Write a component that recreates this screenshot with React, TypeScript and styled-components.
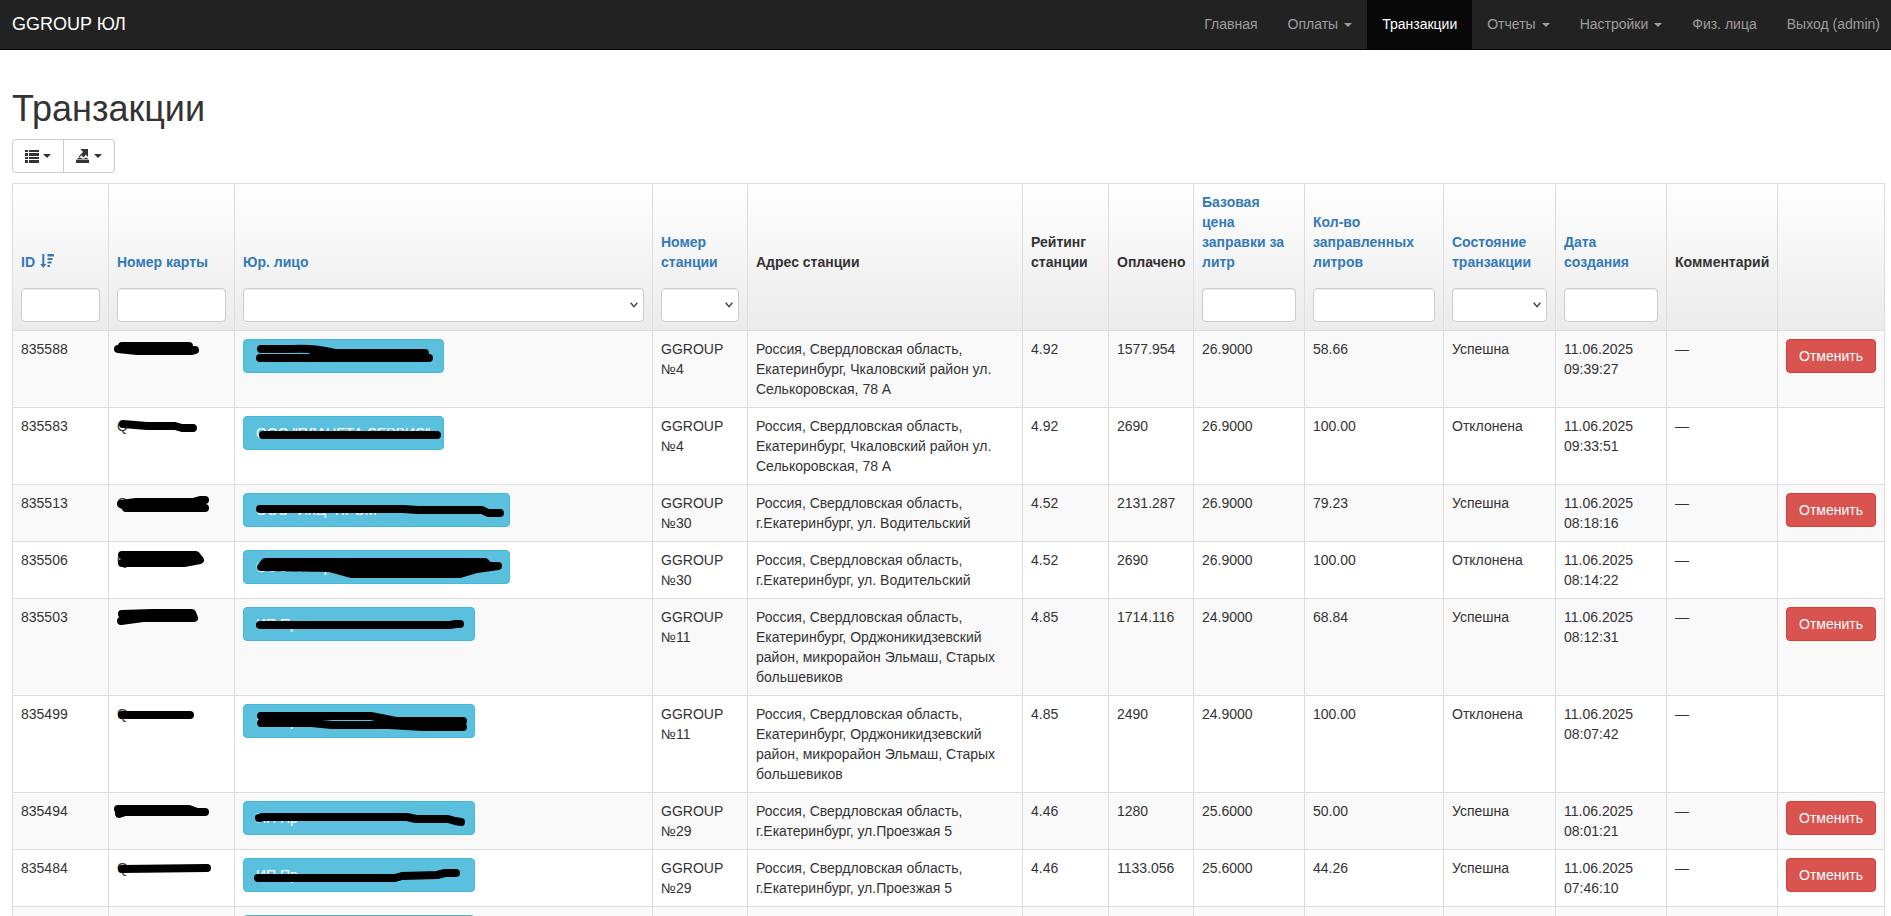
import React from 'react';
import styled, { createGlobalStyle } from 'styled-components';

const GlobalStyle = createGlobalStyle`
  *, *::before, *::after { box-sizing: border-box; }
  body {
    margin: 0;
    background: #fff;
    color: #333;
    font: 14px/20px "Liberation Sans", Arial, sans-serif;
  }
`;

const Page = styled.div`
  height: 100vh;
  overflow: hidden;
`;

const NavBar = styled.header`
  display: flex;
  justify-content: space-between;
  height: 50px;
  background: #222;
  border-bottom: 1px solid #080808;
`;

const Brand = styled.a`
  padding: 14px 12px;
  color: #fff;
  font-size: 18px;
  text-decoration: none;
`;

const NavList = styled.nav`
  display: flex;
`;

const NavLink = styled.a<{ $active?: boolean }>`
  padding: 14px 15px;
  color: ${(p) => (p.$active ? '#fff' : '#9d9d9d')};
  background: ${(p) => (p.$active ? '#080808' : 'transparent')};
  text-decoration: none;
  white-space: nowrap;

  &:last-child {
    padding-right: 11px;
  }
`;

const Caret = styled.span<{ $gap?: number }>`
  display: inline-block;
  margin-left: ${(p) => p.$gap ?? 0}px;
  vertical-align: middle;
  border-top: 4px solid;
  border-right: 4px solid transparent;
  border-left: 4px solid transparent;
`;

const Main = styled.main`
  padding: 39px 6px 0 12px;
`;

const Title = styled.h1`
  margin: 0 0 10px;
  font-size: 36px;
  font-weight: 400;
  line-height: 40px;
`;

const Toolbar = styled.div`
  display: flex;
  margin-bottom: 10px;
`;

const ToolButton = styled.button`
  display: flex;
  align-items: center;
  gap: 4px;
  height: 34px;
  padding: 0 12px;
  color: #333;
  background: #fff;
  border: 1px solid #ccc;
  border-radius: 4px 0 0 4px;

  & + & {
    margin-left: -1px;
    border-radius: 0 4px 4px 0;
  }
`;

const Table = styled.table`
  width: 100%;
  table-layout: fixed;
  border-collapse: collapse;
  border: 1px solid #ddd;
`;

const Col = styled.col<{ $width?: number }>`
  width: ${(p) => (p.$width ? `${p.$width}px` : 'auto')};
`;

const Head = styled.thead`
  background: linear-gradient(to bottom, #fff 0%, #ebebeb 100%);
`;

const HeadCell = styled.th`
  padding: 8px;
  border: 1px solid #ddd;
  border-bottom: 0;
  text-align: left;
  vertical-align: bottom;
`;

const FilterCell = styled.td`
  height: 50px;
  padding: 8px;
  border: 1px solid #ddd;
  border-top: 0;
`;

const SortLink = styled.a`
  color: #337ab7;
  text-decoration: none;

  svg {
    margin-left: 5px;
    vertical-align: -1px;
  }
`;

const Field = styled.input`
  display: block;
  width: 100%;
  height: 34px;
  padding: 6px 12px;
  font: inherit;
  color: #555;
  background: #fff;
  border: 1px solid #ccc;
  border-radius: 4px;
  box-shadow: inset 0 1px 1px rgba(0, 0, 0, 0.075);
  appearance: none;
`;

const SelectWrap = styled.div`
  position: relative;

  svg {
    position: absolute;
    top: 14px;
    right: 6px;
    pointer-events: none;
  }
`;

const Row = styled.tr`
  background: #fff;

  &:nth-child(odd) {
    background: #f9f9f9;
  }
`;

const Cell = styled.td`
  padding: 8px;
  border: 1px solid #ddd;
  vertical-align: top;
`;

const CardNumber = styled.span`
  position: relative;
  display: block;
  height: 20px;
`;

const Company = styled.button<{ $width: number }>`
  position: relative;
  display: block;
  width: ${(p) => p.$width}px;
  height: 34px;
  padding: 6px 12px;
  font: inherit;
  color: #fff;
  text-align: left;
  white-space: nowrap;
  background: #5bc0de;
  border: 1px solid #46b8da;
  border-radius: 4px;
`;

const CancelButton = styled.button`
  display: block;
  width: 100%;
  height: 34px;
  padding: 0;
  font: inherit;
  color: #fff;
  background: #d9534f;
  border: 1px solid #d43f3a;
  border-radius: 4px;
`;

const MarkerLayer = styled.svg<{ $inButton?: boolean }>`
  position: absolute;
  top: ${(p) => (p.$inButton ? '-1px' : '0')};
  left: ${(p) => (p.$inButton ? '-1px' : '0')};
  width: 1px;
  height: 1px;
  overflow: visible;
`;

const Marker = ({ d, inButton, solid }: { d: string; inButton?: boolean; solid?: boolean }) => (
  <MarkerLayer $inButton={inButton} aria-hidden="true">
    <path
      d={d}
      fill={solid ? '#000' : 'none'}
      stroke="#000"
      strokeWidth={8}
      strokeLinecap="round"
      strokeLinejoin="round"
    />
  </MarkerLayer>
);

const ListIcon = () => (
  <svg width="14" height="14" viewBox="0 0 14 14" fill="currentColor" aria-hidden="true">
    <path d="M0 1h3v2H0zM4 1h10v2H4zM0 4h3v3H0zM4 4h10v3H4zM0 8h3v2H0zM4 8h10v2H4zM0 11h3v3H0zM4 11h10v3H4z" />
  </svg>
);

const ExportIcon = () => (
  <svg width="14" height="14" viewBox="0 0 14 14" fill="currentColor" aria-hidden="true">
    <path d="M4.500 0H12v8L9.800 5.800 7.600 8.500 5.300 6.200 3.600 8.400 2.700 7.400 7 3z" />
    <path d="M2.200 8.800H5L6.200 9.800H8.200L9.400 8.800H11L12.200 10.200H1z" />
    <path d="M.5 10.800h12.500V14H0v-2.800z" />
  </svg>
);

const SortDescIcon = () => (
  <svg width="14" height="14" viewBox="0 0 14 14" fill="currentColor" aria-hidden="true">
    <path d="M2.300 0h2v10H6.300L3.300 14 .3 10h2zM7.500 0H14v2.500H7.500zM7.500 4H12.500v2H7.500zM7.500 7.500H11.500v2H7.500zM7.500 11H10v2H7.500z" />
  </svg>
);

const ChevronIcon = () => (
  <svg width="8" height="6" viewBox="0 0 8 6" fill="none" stroke="#444" strokeWidth="1.4" aria-hidden="true">
    <path d="M.7.7 4 4.700 7.300.7" />
  </svg>
);

const navItems = [
  { label: 'Главная' },
  { label: 'Оплаты', menu: true },
  { label: 'Транзакции', active: true },
  { label: 'Отчеты', menu: true },
  { label: 'Настройки', menu: true },
  { label: 'Физ. лица' },
  { label: 'Выход (admin)' },
];

type Column = {
  label: string;
  width?: number;
  sortable?: boolean;
  sorted?: boolean;
  filter?: 'text' | 'select';
};

const columns: Column[] = [
  { label: 'ID', width: 96, sortable: true, sorted: true, filter: 'text' },
  { label: 'Номер карты', width: 126, sortable: true, filter: 'text' },
  { label: 'Юр. лицо', sortable: true, filter: 'select' },
  { label: 'Номер станции', width: 95, sortable: true, filter: 'select' },
  { label: 'Адрес станции', width: 275 },
  { label: 'Рейтинг станции', width: 86 },
  { label: 'Оплачено', width: 85 },
  { label: 'Базовая цена заправки за литр', width: 111, sortable: true, filter: 'text' },
  { label: 'Кол-во заправленных литров', width: 139, sortable: true, filter: 'text' },
  { label: 'Состояние транзакции', width: 112, sortable: true, filter: 'select' },
  { label: 'Дата создания', width: 111, sortable: true, filter: 'text' },
  { label: 'Комментарий', width: 111 },
  { label: '', width: 107 },
];

const CHKALOVSKY = 'Россия, Свердловская область, Екатеринбург, Чкаловский район ул. Селькоровская, 78 А';
const VODITELSKY = 'Россия, Свердловская область, г.Екатеринбург, ул. Водительский';
const ELMASH =
  'Россия, Свердловская область, Екатеринбург, Орджоникидзевский район, микрорайон Эльмаш, Старых большевиков';
const PROEZZHAYA = 'Россия, Свердловская область, г.Екатеринбург, ул.Проезжая 5';

type Transaction = {
  id: string;
  card: string;
  cardMark: string;
  company: string;
  width: number;
  mark: string;
  solid?: boolean;
  station: string;
  address: string;
  rating: string;
  paid: string;
  price: string;
  litres: string;
  ok: boolean;
  time: string;
};

const rows: Transaction[] = [
  {
    id: '835588', card: '', cardMark: 'M5 7H72M1 10L20 12H74L78 11M8 9H72',
    company: '', width: 201, mark: 'M18 10H50Q72 9 92 14H182M17 19H186M70 14H100',
    station: 'GGROUP №4', address: CHKALOVSKY, rating: '4.92', paid: '1577.954',
    price: '26.9000', litres: '58.66', ok: true, time: '09:39:27',
  },
  {
    id: '835583', card: 'Q', cardMark: 'M6 8L30 10L58 10L65 12H76',
    company: 'ООО "ПЛАНЕТА СЕРВИС"', width: 201, mark: 'M20 19H194',
    station: 'GGROUP №4', address: CHKALOVSKY, rating: '4.92', paid: '2690',
    price: '26.9000', litres: '100.00', ok: false, time: '09:33:51',
  },
  {
    id: '835513', card: 'Q', cardMark: 'M4 11L19 9H76L83 7H88M9 15H88M6 12H82',
    company: 'ООО "ИКЦ "ПРОМ', width: 267, mark: 'M17 16H160L175 17H239L245 20H257',
    station: 'GGROUP №30', address: VODITELSKY, rating: '4.52', paid: '2131.287',
    price: '26.9000', litres: '79.23', ok: true, time: '08:18:16',
  },
  {
    id: '835506', card: 'Q', cardMark: 'M5 5H79L83 10L67 13H5M8 9H78',
    company: 'ООО "ИКЦ "', width: 267,
    mark: 'M18 17L22 12H242L246 16H255L234 19L217 24H108L86 18Z', solid: true,
    station: 'GGROUP №30', address: VODITELSKY, rating: '4.52', paid: '2690',
    price: '26.9000', litres: '100.00', ok: false, time: '08:14:22',
  },
  {
    id: '835503', card: '', cardMark: 'M5 7L35 6H75L77 11H26L4 14M6 10H70',
    company: 'ИП Пр', width: 232, mark: 'M17 18H207L213 17H217',
    station: 'GGROUP №11', address: ELMASH, rating: '4.85', paid: '1714.116',
    price: '24.9000', litres: '68.84', ok: true, time: '08:12:31',
  },
  {
    id: '835499', card: 'Q', cardMark: 'M5 11H73',
    company: 'ИП Пр', width: 232,
    mark: 'M18 12H128L153 17H220M18 19H68L89 21H146L180 23H220M150 19H216',
    station: 'GGROUP №11', address: ELMASH, rating: '4.85', paid: '2490',
    price: '24.9000', litres: '100.00', ok: false, time: '08:07:42',
  },
  {
    id: '835494', card: '', cardMark: 'M1 8H72L80 11H88M2 13L8 11H80',
    company: 'ИП Пр', width: 232, mark: 'M16 17L20 16H164L173 18H205L212 20L218 21',
    station: 'GGROUP №29', address: PROEZZHAYA, rating: '4.46', paid: '1280',
    price: '25.6000', litres: '50.00', ok: true, time: '08:01:21',
  },
  {
    id: '835484', card: 'Q', cardMark: 'M5 11L90 10',
    company: 'ИП Пр', width: 232, mark: 'M15 20H152L159 18L194 17L202 15H213',
    station: 'GGROUP №29', address: PROEZZHAYA, rating: '4.46', paid: '1133.056',
    price: '25.6000', litres: '44.26', ok: true, time: '07:46:10',
  },
];

export default function App() {
  return (
    <Page>
      <GlobalStyle />
      <NavBar>
        <Brand href="#">GGROUP ЮЛ</Brand>
        <NavList>
          {navItems.map((item) => (
            <NavLink key={item.label} href="#" $active={item.active}>
              {item.label}
              {item.menu && <Caret $gap={6} />}
            </NavLink>
          ))}
        </NavList>
      </NavBar>
      <Main>
        <Title>Транзакции</Title>
        <Toolbar>
          <ToolButton type="button" aria-label="Столбцы">
            <ListIcon />
            <Caret />
          </ToolButton>
          <ToolButton type="button" aria-label="Экспорт">
            <ExportIcon />
            <Caret />
          </ToolButton>
        </Toolbar>
        <Table>
          <colgroup>
            {columns.map((c, i) => (
              <Col key={i} $width={c.width} />
            ))}
          </colgroup>
          <Head>
            <tr>
              {columns.map((c, i) => (
                <HeadCell key={i} scope="col">
                  {c.sortable ? (
                    <SortLink href="#">
                      {c.label}
                      {c.sorted && <SortDescIcon />}
                    </SortLink>
                  ) : (
                    c.label
                  )}
                </HeadCell>
              ))}
            </tr>
            <tr>
              {columns.map((c, i) => (
                <FilterCell key={i}>
                  {c.filter === 'text' && <Field type="text" aria-label={c.label} />}
                  {c.filter === 'select' && (
                    <SelectWrap>
                      <Field as="select" aria-label={c.label}>
                        <option value="" />
                      </Field>
                      <ChevronIcon />
                    </SelectWrap>
                  )}
                </FilterCell>
              ))}
            </tr>
          </Head>
          <tbody>
            {rows.map((r) => (
              <Row key={r.id}>
                <Cell>{r.id}</Cell>
                <Cell>
                  <CardNumber>
                    {r.card}
                    <Marker d={r.cardMark} />
                  </CardNumber>
                </Cell>
                <Cell>
                  <Company type="button" $width={r.width}>
                    {r.company}
                    <Marker d={r.mark} solid={r.solid} inButton />
                  </Company>
                </Cell>
                <Cell>{r.station}</Cell>
                <Cell>{r.address}</Cell>
                <Cell>{r.rating}</Cell>
                <Cell>{r.paid}</Cell>
                <Cell>{r.price}</Cell>
                <Cell>{r.litres}</Cell>
                <Cell>{r.ok ? 'Успешна' : 'Отклонена'}</Cell>
                <Cell>11.06.2025 {r.time}</Cell>
                <Cell>—</Cell>
                <Cell>{r.ok && <CancelButton type="button">Отменить</CancelButton>}</Cell>
              </Row>
            ))}
            <Row>
              {columns.map((c, i) => (
                <Cell key={i}>{i === 2 && <Company type="button" $width={232} />}</Cell>
              ))}
            </Row>
          </tbody>
        </Table>
      </Main>
    </Page>
  );
}
